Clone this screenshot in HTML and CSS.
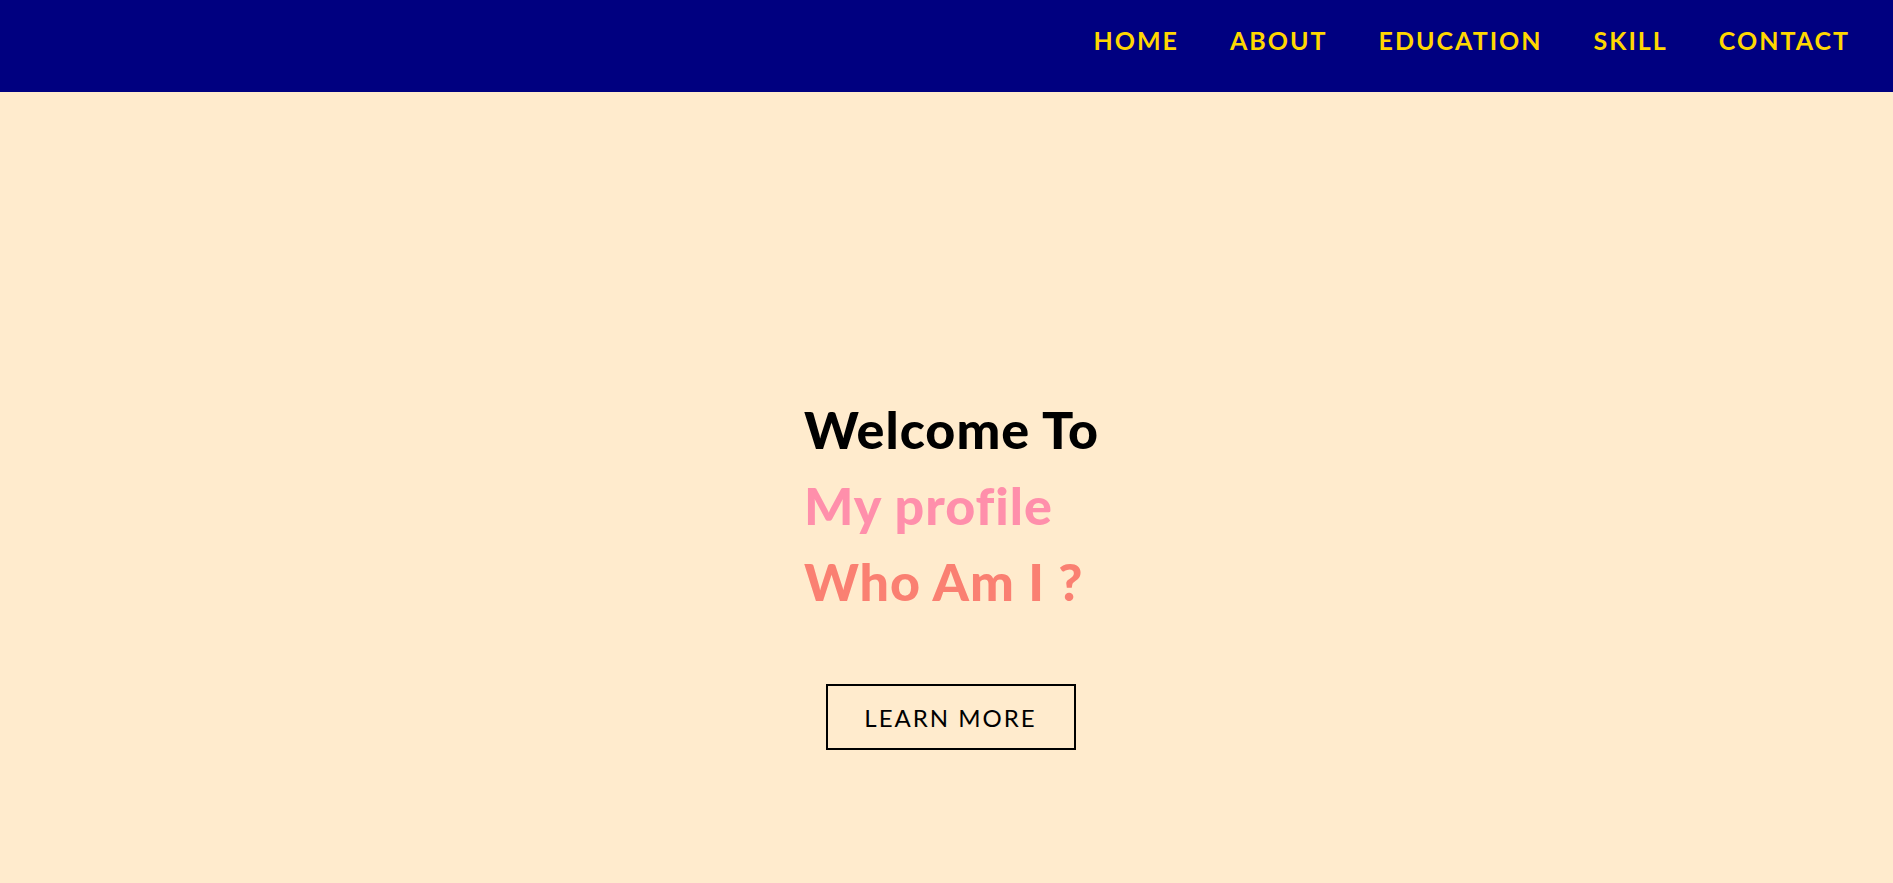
FILE: index.html
```html
<!DOCTYPE html>
<html lang="en">
<head>
<meta charset="utf-8">
<title>My profile</title>
<link rel="stylesheet" href="styles.css">
</head>
<body>
<header class="topbar">
  <nav class="menu">
    <a class="menu-link" href="#home">HOME</a>
    <a class="menu-link" href="#about">ABOUT</a>
    <a class="menu-link" href="#education">EDUCATION</a>
    <a class="menu-link" href="#skill">SKILL</a>
    <a class="menu-link" href="#contact">CONTACT</a>
  </nav>
</header>
<main class="hero">
  <div class="hero-text">
    <h1 class="line line-welcome">Welcome To</h1>
    <h2 class="line line-profile">My profile</h2>
    <h2 class="line line-who">Who Am I ?</h2>
  </div>
  <a class="learn-btn" href="#about">LEARN MORE</a>
</main>
</body>
</html>
```
FILE: styles.css
```css
* { box-sizing: border-box; }
html, body { margin: 0; padding: 0; }
body {
  background: #ffebcd;
  font-family: "Lato", "Noto Sans", sans-serif;
  min-height: 883px;
}
.topbar {
  background: #000080;
  height: 92px;
  display: flex;
  justify-content: flex-end;
  align-items: flex-start;
  padding: 25px 43px 0 0;
}
.menu {
  display: flex;
  gap: 51px;
}
.menu-link {
  color: #ffd700;
  text-decoration: none;
  font-size: 25px;
  font-weight: 700;
  letter-spacing: 2px;
  line-height: 30px;
}
.hero {
  display: flex;
  flex-direction: column;
  align-items: center;
  padding-top: 299px;
}
.hero-text {
  width: fit-content;
  margin-left: 10px;
}
.line {
  margin: 0;
  font-size: 52px;
  line-height: 76px;
  font-weight: 900;
  letter-spacing: 1px;
}
.line-welcome { color: #000; }
.line-profile { color: #ff8fab; }
.line-who { color: #fa8072; }
.learn-btn {
  margin-top: 65px;
  margin-left: 8px;
  width: 250px;
  height: 66px;
  border: 2px solid #000;
  display: flex;
  align-items: center;
  justify-content: center;
  color: #000;
  text-decoration: none;
  font-size: 24px;
  letter-spacing: 2px;
  font-weight: 400;
}
```
